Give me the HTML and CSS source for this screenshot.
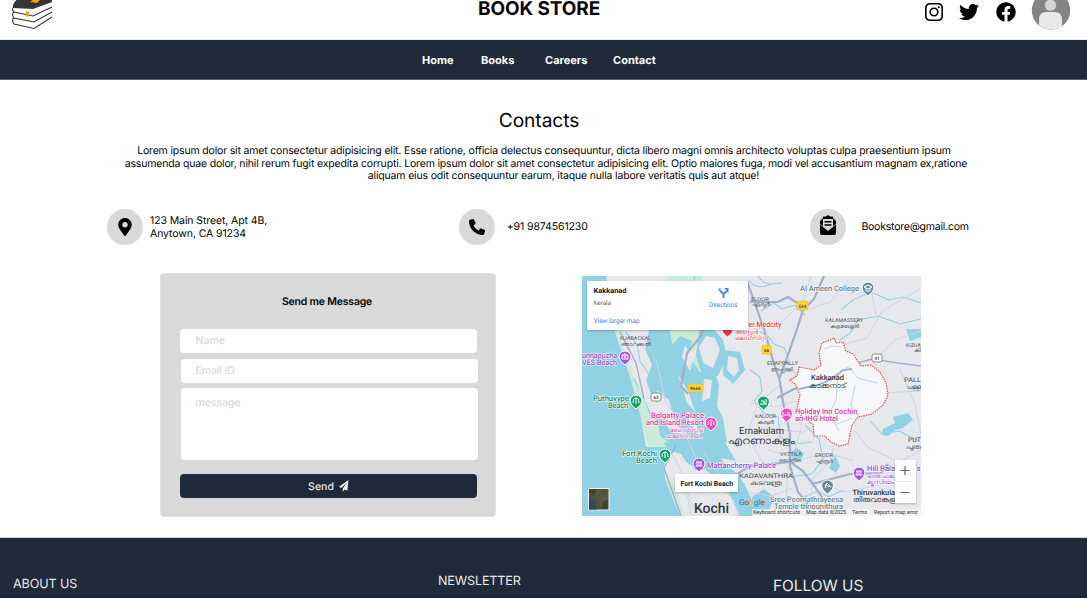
FILE: index.html
```html
<!DOCTYPE html>
<html lang="en">
<head>
<meta charset="utf-8">
<title>Book Store - Contact</title>
<link rel="stylesheet" href="styles.css">
</head>
<body>
<header class="header">
  <svg class="logo" viewBox="0 0 54 32" width="54" height="32">
    <path d="M13 8Q12 3 20-3L52-3V2L33 9Z" fill="#353535"/>
    <path d="M30 2l4-3 6 1-3 3z" fill="#f90"/>
    <g fill="none" stroke="#353535" stroke-width="1.1">
      <path d="M14 7Q11 9 14 12L33 16 52 7M14 12Q11 14 14 18L34 22 52 12M14 18Q11 20 14 24L34 28.500 52 17"/>
    </g>
    <path d="M26 11l3 1v5l-1.500-1-1.500 1z" fill="#f90"/>
  </svg>
  <h1 class="brand">BOOK STORE</h1>
  <div class="social">
    <svg viewBox="0 0 448 448" width="18" height="18"><path fill-rule="evenodd" d="M130 0H318Q448 0 448 130V318Q448 448 318 448H130Q0 448 0 318V130Q0 0 130 0ZM132 40Q40 40 40 132V316Q40 408 132 408H316Q408 408 408 316V132Q408 40 316 40ZM224 109a115 115 0 1 1 0 230a115 115 0 1 1 0-230ZM224 149a75 75 0 1 0 0 150a75 75 0 1 0 0-150Z"/><circle cx="343" cy="105" r="27"/></svg>
    <svg viewBox="0 0 512 512" width="20" height="20"><path d="M459.370 151.716c.325 4.548.325 9.097.325 13.645 0 138.720-105.583 298.558-298.558 298.558-59.452 0-114.680-17.219-161.137-47.106 8.447.974 16.568 1.299 25.340 1.299 49.055 0 94.213-16.568 130.274-44.832-46.132-.975-84.792-31.188-98.112-72.772 6.498.974 12.995 1.624 19.818 1.624 9.421 0 18.843-1.300 27.614-3.573-48.081-9.747-84.143-51.980-84.143-102.985v-1.299c13.969 7.797 30.214 12.670 47.431 13.319-28.264-18.843-46.781-51.005-46.781-87.391 0-19.492 5.197-37.360 14.294-52.954 51.655 63.675 129.300 105.258 216.365 109.807-1.624-7.797-2.599-15.918-2.599-24.040 0-57.828 46.782-104.934 104.934-104.934 30.213 0 57.502 12.670 76.670 33.137 23.715-4.548 46.456-13.320 66.599-25.340-7.798 24.366-24.366 44.833-46.132 57.827 21.117-2.273 41.584-8.122 60.426-16.243-14.292 20.791-32.161 39.308-52.628 54.253z"/></svg>
    <svg viewBox="0 0 512 512" width="20" height="20"><path d="M504 256C504 119 393 8 256 8S8 119 8 256c0 123.780 90.690 226.380 209.250 245V327.690h-63V256h63v-54.640c0-62.150 37-96.480 93.670-96.480 27.140 0 55.520 4.840 55.520 4.840v61h-31.280c-30.800 0-40.410 19.120-40.410 38.730V256h68.780l-11 71.690h-57.780V501C413.310 482.380 504 379.780 504 256z"/></svg>
  </div>
  <svg class="avatar" viewBox="0 0 40 32" width="40" height="32">
    <defs><clipPath id="face"><circle cx="20" cy="10.500" r="19.200"/></clipPath></defs>
    <g clip-path="url(#face)"><path d="M0-10H40V32H0Z" fill="#828584"/><path d="M8 32V20Q8 12 15 12H24Q31 12 31 20V32Z" fill="#e7eae9"/><circle cx="19.500" cy="5.300" r="6" fill="#d2d4d3" stroke="#828584" stroke-width=".7"/></g>
  </svg>
</header>
<nav class="nav"><a class="home">Home</a><a class="books">Books</a><a class="careers">Careers</a><a class="contact">Contact</a></nav>
<main class="main">
  <h2 class="title">Contacts</h2>
  <p class="intro"><span class="first">Lorem ipsum dolor sit amet consectetur adipisicing elit. Esse ratione, officia delectus consequuntur, dicta libero magni omnis architecto voluptas culpa praesentium ipsum</span><br>assumenda quae dolor, nihil rerum fugit expedita corrupti. Lorem ipsum dolor sit amet consectetur adipisicing elit. Optio maiores fuga, modi vel accusantium magnam ex,ratione<br><span class="last">aliquam eius odit consequuntur earum, itaque nulla labore veritatis quis aut atque!</span></p>
  <section class="details">
    <div class="detail"><span class="disc"><svg viewBox="0 0 384 512" width="14" height="18"><path d="M172.268 501.670C26.970 291.031 0 269.413 0 192 0 85.961 85.961 0 192 0s192 85.961 192 192c0 77.413-26.970 99.031-172.268 309.670-9.535 13.774-29.930 13.773-39.464 0zM192 272c44.183 0 80-35.817 80-80s-35.817-80-80-80-80 35.817-80 80 35.817 80 80 80z"/></svg></span><address class="text street">123 Main Street, Apt 4B,<br>Anytown, CA 91234</address></div>
    <div class="detail"><span class="disc"><svg viewBox="0 0 512 512" width="16" height="16"><path d="M164.900 24.600c-7.700-18.600-28-28.500-47.400-23.200l-88 24C12.100 30.200 0 46 0 64c0 247.400 200.600 448 448 448 18 0 33.800-12.100 38.600-29.500l24-88c5.300-19.400-4.600-39.700-23.200-47.400l-96-40c-16.300-6.800-35.200-2.100-46.300 11.600L304.700 368C234.300 334.700 177.300 277.700 144 207.300l49.300-40.300c13.700-11.200 18.400-30 11.600-46.300l-40-96z"/></svg></span><span class="text phone">+91 9874561230</span></div>
    <div class="detail"><span class="disc"><svg class="mail" viewBox="0 0 16 20" width="16" height="20"><path d="M0 6L3 3V1.500H6L8 0 10 1.500H13V3L16 6V18Q16 20 14 20H2Q0 20 0 18Z"/><path d="M3 4H13V11.500L8 15.500 3 11.500Z" fill="#d9d9d9"/><path d="M4.500 6H11.500V7.500H4.500ZM4.500 9.200H11.500V10.700H4.500Z"/><path d="M.3 9.500L8 15.500 15.700 9.500" fill="none" stroke="#d9d9d9" stroke-width=".8"/></svg></span><span class="text email">Bookstore@gmail.com</span></div>
  </section>
  <section class="columns">
    <form class="form">
      <h3 class="form-title">Send me Message</h3>
      <div class="field">Name</div>
      <div class="field shifted">Email ID</div>
      <div class="field shifted area">message</div>
      <div class="send">Send <svg viewBox="0 0 10 12" width="10" height="12"><path d="M9.500 0L0 6.700 2.500 8 8 2.300 3.800 8.800V11.800L5.300 9.500 8.300 10.500Z" fill="#fff"/></svg></div>
    </form>
    <svg class="map" viewBox="582 276 339 240" width="339" height="240">
      <path fill="#e6e8eb" d="M582 276H921V516H582Z"/>
      <g fill="#c9ebd8"><path d="M610 325l12 2 22 62 20 30 10 29-25-1-14-40zM668 276h34l4 52-12 22-18 8-10-30zM655 365l18 8 2 20-12 4zM700 338l12 12-8 22-12-6zM665 480l8 2 12 34h-7z"/></g>
      <g fill="#90d2e3">
        <path d="M582 276H606L613 326 621 350 629 374 636 399 641 419 646 447H672L664 457 665 479 674 502 680 516H582Z"/>
        <path d="M650 326h19l4 22 1 18 8 20 5 17 10 11 5 18 14 12 7 18 13 11 9 12 9 20 3 13h-18l-5-17-16-19-13-13-13 2-11-17-11-3-2-9-8-6-2-15-9-8-7-20-8-12 4-18 7-13z"/>
        <path d="M680 336l12 5-4 14 12 17 15 1 4 12-2 21 6 12 4 25-15-6-16-23-8-23-13-20-6-22z"/>
        <path d="M699 330l13-3 11 13 4 17-9 19-15 1-7-21z"/>
        <path d="M724 350l16 2 5 18-12 14-10-9z"/>
        <path d="M668 449l-4-6 12-2 16-10 14-14 14 2 4 22 12 20-16-3-14-5-12 2-14-8z"/>
        <path d="M752 497l12-8 10 8-5 14-15 5z"/>
        <path d="M883 429l12-6-2-6 15-4 5 7-10 8-8 2-7 6-6-1zM906 329h15v8l-11 4zM789 453l8-5 7 5-4 9-8-1zM829 420l12 6 8-4-10 15-9-2zM835 455l5 11-4 7-7-5z"/>
      </g>
      <g fill="#e6e8eb"><path d="M618 335l24 7 10 23-6 16 7 17 13 16-14 2-18-39zM657 390l12 10 5 20 10 14-13-2-13-19zM687 410l7 8 5 15-9-8zM704 379l8 1-2 18-8 3zM706 336l9 2 5 12-7 18-10-5-4-16zM728 356l9 2 2 12-5 7-7-7zM685 345l8 15-3 11-8-14zM680 458l12 8 10 13 6 11-5 9-11-14z"/></g>
      <g fill="none" stroke="#90d2e3" stroke-width="1.100">
        <path d="M650 330l-3 15 8 16-3 14 8 17M625 332l12 12 3 17 10 15M749 281q7 8 16 5t17-3M758 276q5 8 13 8M805 315l-10-10-13 4-8-6-13 8M841 310l12-10 18-8 18 8 14-3 18 6M840 340l10-7 8-13 20-4 22 8 21-5M760 332q10 4 14 12l10 4q5 9 4 17M750 370l10 7 2 15-8 9 10 12 14 4 2 20 15 7 17-2M805 425l14 14 4 20-11 15-23 3M852 355l11 12-7 16-20 10-10 18M839 392l12 6 20-7 6 13M800 499l17-8 12 6 14-7M870 421l12 13 17-3 20 10M824 348l7 5 5-6 8 8M695 276q-5 15 7 25t4 30"/>
      </g>
      <g fill="none" stroke="#d0d4df" stroke-width="1">
        <path d="M750 403l28 4 17-6 22 5M747 433l25-4 31 3 17-9M767 450l35 9 25-6 27 8M811 276l-8 26-21 20-28 7M848 281l-18 21-20 7M842 345l25-7 15-27 38-22M876 315l-6-30M875 360l20-20 26-9M780 365l20 10 10 20M780 385l-22 18-11 32 17 30M803 401l-2 29-13 40-3 46M835 440l-5 22-17 16-4 38M854 430l15 18 30 14 22-12M862 420l18-27 40-2M900 369l15 36 6 30M643 335l14 28 8 37 15 24 19 40M671 452l15 28 5 36M676 482l25 34M704 452l18 27 18 37M810 480l35 12 44-9M747 492l24 4 22-8"/>
      </g>
      <g fill="none" stroke="#a3afca" stroke-width="2.200">
        <path d="M824 276l-10 23-11 11-6 19-9 26-9 24M747 281l7 20 10 28 8 28 8 25 3 20 7 32v32l8 26 9 11 2 31M750 302h28l10-5 14 9M688 394l-7-8 6-33 14-17 7-21 14-11M777 398l17-9 13-4 13-1M790 462l-40 4-26 16M790 462l13 9 12 16 20 30M812 484l38-10 31-1 7-9" />
        <path stroke-width="1.400" d="M820 384l25-8 12-13 15-4 26 4 23 3M620 332l16 31 8 36M676 445l-12 23 17 48"/>
      </g>
      <path d="M799 367l15 3 7-5-2-12 3-10 8-3 4-2 2 5 7-1 3 9 7 3 8 12 10-1 9 7 6 11 2 12-5 10-11 9-14 3-6 8-4 19-9 2-8-4-6-6h-11l-1-12-11-7-5-9 3-13-4-10-6-5 7-4z" fill="#f6f7f8" stroke="#e45352" stroke-width="1.200" stroke-dasharray="1.500 1"/>
      <path d="M824 349l8-3 9 1M828 380l20-13 10 11 19 5M838 372l-2 28-7 14 10 17M855 385l-4 20 10 16M830 420l8 4 14-6" stroke="#bad6e3" fill="none"/>
      <path d="M799 389l19-4 16-7 9-8 9-1" stroke="#a4aec9" stroke-width="1.800" fill="none"/>
      <g fill="#f8d638" stroke="#e2b32e" stroke-width=".5"><rect x="797" y="301" width="11" height="9" rx="1"/><rect x="762" y="345" width="9" height="9" rx="1"/><rect x="688" y="384" width="15" height="8" rx="1"/></g>
      <g class="road"><text x="798.500" y="308">544</text><text x="764" y="352">66</text><text x="690" y="390">966A</text></g>
      <g fill="#fff" stroke="#74776c" stroke-width=".8"><rect x="651" y="393" width="10" height="8" rx="2"/><rect x="872" y="354" width="10" height="8" rx="2"/></g><g class="road"><text x="653.500" y="399">63</text><text x="874.500" y="360">41</text></g>
      <g stroke="#fff" stroke-width="1">
        <g fill="#13a66c"><path d="M630 401a6 6 0 1 1 12 0q0 4-6 8-6-4-6-8zM659 455a6 6 0 1 1 12 0q0 4-6 8-6-4-6-8zM757.500 402a6 6 0 1 1 12 0q0 4-6 8-6-4-6-8z"/></g>
        <g fill="#fa46bd"><path d="M705 423a6 6 0 1 1 12 0q0 4-6 8-6-4-6-8zM780.500 414a6 6 0 1 1 12 0q0 4-6 8-6-4-6-8z"/></g>
        <g fill="#a452ea"><path d="M619 357a6 6 0 1 1 12 0q0 4-6 8-6-4-6-8zM693 464a6 6 0 1 1 12 0q0 4-6 8-6-4-6-8zM853 473a6 6 0 1 1 12 0q0 4-6 8-6-4-6-8z"/></g>
        <g fill="#668b9c"><path d="M862 288a6 6 0 1 1 12 0q0 4-6 8-6-4-6-8zM821.500 486a6 6 0 1 1 12 0q0 4-6 8-6-4-6-8z"/></g>
        <path fill="#e93545" d="M721.500 329a6 6 0 1 1 12 0q0 4-6 8-6-4-6-8z"/>
      </g>
      <g fill="none" stroke="#fff" stroke-width="1"><path d="M633 403q0-5 3-5t3 5M636 398v6M662 457q0-5 3-5t3 5M665 452v6M760 404h7M761 401h3v3M766 399v4M622 355h6v4h-6zM624 354h2M708 425q0-5 3-5t3 5M711 420v6M783 412v5M784 415h6v2M787 413h3M695.500 466h7M696 462h6M697 462v4M699 462v4M701 462v4M855.500 475h7M856 471h6M857 471v4M859 471v4M861 471v4M864 287l4-2 4 2-4 2zM866 288v3h4v-3M825 488l2-5 4 4-6-2"/><circle cx="625" cy="357" r="1"/></g>
      <g class="place college"><text x="800" y="291" textLength="59" lengthAdjust="spacingAndGlyphs">Al Ameen College</text><text x="770" y="502" textLength="73" lengthAdjust="spacingAndGlyphs">Sree Poornathrayeesa</text><text x="774" y="509" textLength="69" lengthAdjust="spacingAndGlyphs">Temple thripunithura</text></g>
      <g class="place violet"><text x="582" y="358" textLength="35" lengthAdjust="spacingAndGlyphs">unnapuzha</text><text x="582" y="365" textLength="35" lengthAdjust="spacingAndGlyphs">VES Beach</text><text x="707" y="468" textLength="69" lengthAdjust="spacingAndGlyphs">Mattancherry Palace</text><text x="867" y="471" textLength="28" lengthAdjust="spacingAndGlyphs">Hill Pala</text><text class="ml" x="867" y="477.500" textLength="27" lengthAdjust="spacingAndGlyphs">ഹിൽ പാല</text><text class="ml" x="867" y="484" textLength="27" lengthAdjust="spacingAndGlyphs">മ്യൂസിയം</text></g>
      <g class="place green"><text x="593" y="401" textLength="36" lengthAdjust="spacingAndGlyphs">Puthuvype</text><text x="608" y="408" textLength="20" lengthAdjust="spacingAndGlyphs">Beach</text><text x="622" y="456" textLength="35" lengthAdjust="spacingAndGlyphs">Fort Kochi</text><text x="636" y="463" textLength="21" lengthAdjust="spacingAndGlyphs">Beach</text></g>
      <g class="place pink"><text x="651" y="418" textLength="53" lengthAdjust="spacingAndGlyphs">Bolgatty Palace</text><text x="646" y="425" textLength="58" lengthAdjust="spacingAndGlyphs">and Island Resort</text><text class="ml" x="670" y="431.500" textLength="33" lengthAdjust="spacingAndGlyphs">ബോൾഗാട്ടി</text><text class="ml" x="665" y="438" textLength="38" lengthAdjust="spacingAndGlyphs">പാലസ് ദ്വീപ്...</text><text x="795" y="414" textLength="64" lengthAdjust="spacingAndGlyphs">Holiday Inn Cochin,</text><text x="795" y="421" textLength="43" lengthAdjust="spacingAndGlyphs">an IHG Hotel</text></g>
      <g class="place red"><text x="748.500" y="327" textLength="33" lengthAdjust="spacingAndGlyphs">er Medcity</text><text class="ml" x="735" y="333.500" textLength="23" lengthAdjust="spacingAndGlyphs">ആസ്റ്റർ</text><text class="ml" x="735" y="340" textLength="31" lengthAdjust="spacingAndGlyphs">മെഡ്‌സിറ്റി</text></g>
      <g class="area-name"><text x="620" y="340" textLength="31" lengthAdjust="spacingAndGlyphs">NJARACKAL</text><text x="621" y="345.500" textLength="30" lengthAdjust="spacingAndGlyphs">ഞാറക്കൽ</text><text x="751" y="300.500" textLength="18" lengthAdjust="spacingAndGlyphs">ELOOR</text><text x="752" y="306" textLength="18" lengthAdjust="spacingAndGlyphs">ഏലൂർ</text><text x="825" y="322" textLength="38" lengthAdjust="spacingAndGlyphs">KALAMASSERY</text><text x="830" y="327.500" textLength="29" lengthAdjust="spacingAndGlyphs">കളമശ്ശേരി</text><text x="767" y="365" textLength="31" lengthAdjust="spacingAndGlyphs">EDAPPALLY</text><text x="771" y="371" textLength="22" lengthAdjust="spacingAndGlyphs">ഇടപ്പള്ളി</text><text x="906" y="347" textLength="15" lengthAdjust="spacingAndGlyphs">KIZHA</text><text x="914" y="352" textLength="7" lengthAdjust="spacingAndGlyphs">കി</text><text x="755" y="418" textLength="21" lengthAdjust="spacingAndGlyphs">KALOOR</text><text x="757" y="423.500" textLength="17" lengthAdjust="spacingAndGlyphs">കലൂർ</text><text x="780" y="456" textLength="22" lengthAdjust="spacingAndGlyphs">VYTTILA</text><text x="779" y="461.500" textLength="22" lengthAdjust="spacingAndGlyphs">വൈറ്റില</text><text x="815" y="457" textLength="18" lengthAdjust="spacingAndGlyphs">EROOR</text><text x="816" y="462.500" textLength="17" lengthAdjust="spacingAndGlyphs">എരൂർ</text></g>
      <g class="town"><text x="739" y="478" textLength="54" lengthAdjust="spacingAndGlyphs">KADAVANTHRA</text><text x="750" y="485" textLength="32" lengthAdjust="spacingAndGlyphs">കടവന്ത്ര</text><text x="904" y="382" textLength="17" lengthAdjust="spacingAndGlyphs">PALL</text><text x="907" y="389" textLength="14" lengthAdjust="spacingAndGlyphs">പള്ള</text><text x="908" y="442" textLength="13" lengthAdjust="spacingAndGlyphs">PUT</text><text x="906" y="449" textLength="15" lengthAdjust="spacingAndGlyphs">പുത</text></g>
      <g class="city"><text x="811" y="380" textLength="33" lengthAdjust="spacingAndGlyphs">Kakkanad</text><text x="809" y="388" textLength="37" lengthAdjust="spacingAndGlyphs">കാക്കനാട്</text><text x="852.500" y="495" textLength="42.500" lengthAdjust="spacingAndGlyphs">Thiruvankula</text><text x="853" y="502" textLength="42" lengthAdjust="spacingAndGlyphs">തിരുവാങ്കുള</text></g>
      <g class="ernakulam"><text x="739" y="434" textLength="45" lengthAdjust="spacingAndGlyphs">Ernakulam</text><text x="728" y="444" textLength="67" lengthAdjust="spacingAndGlyphs">എറണാകുളം</text></g>
      <text class="kochi" x="694" y="513" textLength="35" lengthAdjust="spacingAndGlyphs">Kochi</text>
      <g class="google"><text x="739" y="505" textLength="26" lengthAdjust="spacingAndGlyphs"><tspan fill="#4285f4">G</tspan><tspan fill="#ea4335">o</tspan><tspan fill="#fbbc05">o</tspan><tspan fill="#4285f4">g</tspan><tspan fill="#34a853">l</tspan><tspan fill="#ea4335">e</tspan></text></g>
      <path d="M752 509H921V516H752Z" fill="#f5f5f5" opacity=".75"/>
      <g class="credits"><text x="753" y="514" textLength="47" lengthAdjust="spacingAndGlyphs">Keyboard shortcuts</text><text x="806" y="514" textLength="40" lengthAdjust="spacingAndGlyphs">Map data ©2025</text><text x="852" y="514" textLength="15" lengthAdjust="spacingAndGlyphs">Terms</text><text x="874" y="514" textLength="44" lengthAdjust="spacingAndGlyphs">Report a map error</text></g>
      <g class="cards" fill="#fff"><path d="M587 281H748V330H587Z"/><path d="M675 474H738V492H675Z"/><path d="M895 460H916V503H895Z"/></g>
      <g class="place violet"><text x="916.500" y="471" textLength="4" lengthAdjust="spacingAndGlyphs">s</text></g>
      <text class="card-title" x="593.500" y="293" textLength="33" lengthAdjust="spacingAndGlyphs">Kakkanad</text><text class="card-sub" x="593.500" y="304.500" textLength="17.500" lengthAdjust="spacingAndGlyphs">Kerala</text>
      <g class="link"><text x="593.500" y="323" textLength="46" lengthAdjust="spacingAndGlyphs">View larger map</text><text x="709" y="306.500" textLength="28.500" lengthAdjust="spacingAndGlyphs">Directions</text></g>
      <path d="M723.500 298V294L720 290.500M723.500 294L727 291" fill="none" stroke="#4b8aed" stroke-width="2"/><path d="M724 288H728.500V293ZM718.500 288.500h3l-3 3z" fill="#4b8aed"/>
      <text class="card-title" x="680.500" y="485.500" textLength="52.500" lengthAdjust="spacingAndGlyphs">Fort Kochi Beach</text>
      <path d="M900.500 470.500H909.500M905 466V475M900.500 492.500H909.500" stroke="#666" stroke-width="1.200"/><path d="M898 481.500H913" stroke="#e6e6e6"/>
      <path d="M588.500 488.500H609V510H588.500Z" fill="#514f3c" stroke="#eee"/><path d="M589 496l5 5 3 8.500h-8z" fill="#30495d"/><path d="M594 492l5-3 4 5 5-1v7l-6 7-5-6z" fill="#5c563f"/><path d="M589 489h8l-3 6-5-2zM603 502l5-3v10h-6z" fill="#35492e"/>
    </svg>
  </section>
</main>
<footer class="footer"><h4 class="about">ABOUT US</h4><h4 class="newsletter">NEWSLETTER</h4><h4 class="follow">FOLLOW US</h4></footer>
</body>
</html>
```

FILE: styles.css
```css
* { box-sizing: border-box; }
body { margin: 0; width: 1087px; height: 598px; overflow: hidden; background: #fff; color: #050505; font-family: Inter, "Liberation Sans", sans-serif; text-rendering: geometricPrecision; }
h1, h2, h3, h4, p { margin: 0; }
svg { display: block; flex: none; }
.header { height: 40px; display: flex; align-items: flex-start; border-bottom: 1px solid #e8eaeb; }
.brand { margin-left: 424px; width: 130px; padding-top: 0; margin-top: -3px; font-size: 19px; letter-spacing: -.1px; line-height: 24px; font-weight: 700; white-space: nowrap; }
.social { display: flex; align-items: center; gap: 16.5px; margin-left: 316.5px; margin-top: 2px; }
.avatar { margin-left: 15px; }
.nav { height: 40px; background: #1f2a3a; border-bottom: 1px solid #526071; color: #fff; display: flex; align-items: center; padding-left: 422px; font-size: 11px; font-weight: 700; }
.nav a { white-space: nowrap; }
.home { width: 59px; }
.books { width: 64px; }
.careers { width: 68px; }
.main { height: 458px; border-bottom: 1px solid #d7dadd; }
.title { padding-top: 28px; padding-right: 9px; text-align: center; font-size: 19.200px; letter-spacing: -.1px; line-height: 24px; font-weight: 400; }
.intro { margin-top: 13px; padding-left: 5px; text-align: center; font-size: 10.500px; letter-spacing: -.17px; line-height: 12.500px; white-space: nowrap; }
.first { margin-right: 4px; }
.last { margin-left: 35px; }
.details { display: flex; margin-top: 26px; padding-left: 107px; height: 37px; }
.detail { width: 351.7px; flex: none; display: flex; align-items: center; }
.detail:last-child { width: auto; }
.disc { width: 36px; height: 36px; border-radius: 50%; background: #d9d9d9; display: flex; align-items: center; justify-content: center; flex: none; }
.mail { margin-bottom: 4px; }
.text { font-size: 10.500px; letter-spacing: -.1px; line-height: 12.500px; font-style: normal; white-space: nowrap; padding-top: 1px; }
.street { margin-left: 7px; }
.phone { margin-left: 12px; }
.email { margin-left: 15px; letter-spacing: -.22px; }
.columns { display: flex; margin-top: 27.5px; padding-left: 159.5px; align-items: flex-start; }
.form { width: 336.5px; height: 244px; border-radius: 4px; background: #d9d9d9; border: 1px solid #e1e1e1; padding: 21px 17px 0 19.5px; }
.form-title { font-size: 10.500px; letter-spacing: -.2px; line-height: 13px; font-weight: 600; text-align: center; margin-bottom: 21px; padding-right: 4px; }
.field { width: 297px; height: 24px; border-radius: 4px; background: #fff; color: #d9d9d9; font-size: 10.500px; line-height: 24px; font-weight: 500; padding-left: 15.5px; margin-bottom: 5.5px; }
.shifted { margin-left: 1px; padding-left: 14.5px; letter-spacing: -.1px; }
.area { height: 72px; line-height: 29px; }
.send { margin-top: 14px; width: 297px; height: 24px; border-radius: 4px; background: #1f2a3a; display: flex; align-items: center; justify-content: center; gap: 5px; color: #e8e8e8; font-size: 10.500px; font-weight: 500; }
.map { margin-left: 86px; margin-top: 2.500px; font-family: Roboto, "Noto Sans", sans-serif; }
.map text { white-space: pre; }
.road { font-size: 4.500px; font-weight: 700; fill: #55502a; }
.place { font-size: 7.600px; font-weight: 500; paint-order: stroke; stroke: #fff; stroke-width: 1px; }
.place .ml { font-size: 6px; }
.college { fill: #668290; }
.violet { fill: #8f4ed0; }
.green { fill: #23845f; }
.pink { fill: #df38a7; }
.red { fill: #df4050; }
.area-name { font-size: 5.200px; fill: #555b63; }
.town { font-size: 6.400px; fill: #444a51; }
.city { font-size: 7.400px; font-weight: 500; fill: #343a40; }
.ernakulam { font-size: 9.800px; fill: #33383e; }
.kochi { font-size: 14px; font-weight: 500; fill: #343940; }
.google { font-size: 8px; font-weight: 500; }
.credits { font-size: 5.600px; fill: #333; }
.cards { filter: drop-shadow(0 1px 1px rgba(0, 0, 0, .25)); }
.card-title { font-size: 7px; font-weight: 700; fill: #171717; }
.card-sub { font-size: 6.400px; fill: #666; }
.link { font-size: 6.600px; fill: #3b7de5; }
.footer { height: 60px; background: #1f2a3a; color: #e9e9e9; display: flex; padding-left: 13px; border-bottom: 1px solid #182434; }
.footer h4 { font-weight: 400; white-space: nowrap; }
.about { width: 425px; margin-top: 39px; font-size: 12.600px; letter-spacing: -.12px; line-height: 16px; }
.newsletter { width: 335px; margin-top: 36px; font-size: 12.600px; letter-spacing: -.15px; line-height: 16px; }
.follow { margin-top: 38px; font-size: 15.400px; line-height: 19px; }
```
